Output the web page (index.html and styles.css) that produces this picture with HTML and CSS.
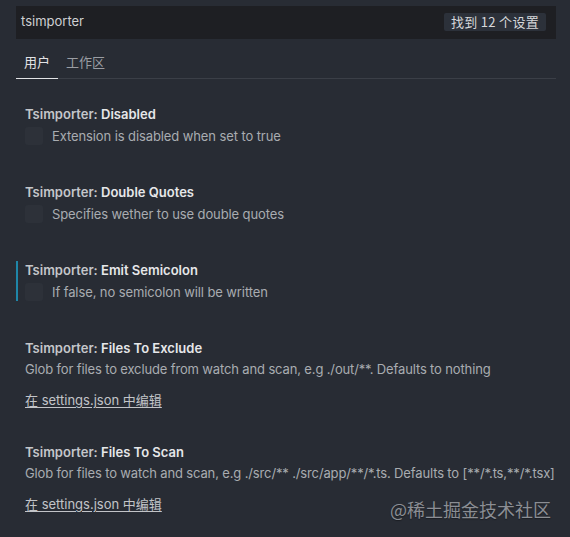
FILE: index.html
```html
<!DOCTYPE html>
<html lang="zh">
<head>
<meta charset="utf-8">
<link rel="stylesheet" href="styles.css">
</head>
<body>
<div class="page">
  <div class="search">
    <span class="query">tsimporter</span>
    <span class="badge">找到 12 个设置</span>
  </div>
  <div class="tabs">
    <span class="tab active">用户</span>
    <span class="tab">工作区</span>
  </div>
  <div class="list">
    <div class="setting bool">
      <div class="body">
        <div class="title"><span class="cat">Tsimporter: </span><span class="label">Disabled</span></div>
        <div class="row"><span class="check"></span><span class="desc">Extension is disabled when set to true</span></div>
      </div>
    </div>
    <div class="setting bool">
      <div class="body">
        <div class="title"><span class="cat">Tsimporter: </span><span class="label">Double Quotes</span></div>
        <div class="row"><span class="check"></span><span class="desc">Specifies wether to use double quotes</span></div>
      </div>
    </div>
    <div class="setting bool">
      <div class="body focused">
        <div class="title"><span class="cat">Tsimporter: </span><span class="label">Emit Semicolon</span></div>
        <div class="row"><span class="check"></span><span class="desc">If false, no semicolon will be written</span></div>
      </div>
    </div>
    <div class="setting text">
      <div class="body">
        <div class="title"><span class="cat">Tsimporter: </span><span class="label">Files To Exclude</span></div>
        <div class="desc block">Glob for files to exclude from watch and scan, e.g ./out/**. Defaults to nothing</div>
        <a class="link">在 settings.json 中编辑</a>
      </div>
    </div>
    <div class="setting text">
      <div class="body">
        <div class="title"><span class="cat">Tsimporter: </span><span class="label">Files To Scan</span></div>
        <div class="desc block">Glob for files to watch and scan, e.g ./src/** ./src/app/**/*.ts. Defaults to [**/*.ts,**/*.tsx]</div>
        <a class="link">在 settings.json 中编辑</a>
      </div>
    </div>
  </div>
  <div class="watermark">@稀土掘金技术社区</div>
</div>
</body>
</html>
```

FILE: styles.css
```css
html, body {
  margin: 0;
  padding: 0;
  background: #282c34;
}
body {
  font-family: Inter, "Noto Sans CJK SC", sans-serif;
  font-size: 13px;
  line-height: 18px;
  color: #abb2bf;
}
.page {
  position: relative;
  width: 570px;
  height: 537px;
  overflow: hidden;
}
.search {
  margin: 6px 14px 0 16px;
  height: 33px;
  box-sizing: border-box;
  padding: 0 10px 3px 5px;
  background: #1e1f23;
  display: flex;
  align-items: center;
  justify-content: space-between;
}
.query {
  color: #cfd0d2;
}
.badge {
  background: #2c313a;
  color: #d7d8da;
  height: 18px;
  line-height: 18px;
  padding: 0 7px 0 7px;
  border-radius: 2px;
  font-family: "Noto Sans CJK SC", sans-serif;
  letter-spacing: 0.3px;
  margin-top: 2px;
}
.tabs {
  margin: 14px 14px 0 16px;
  display: flex;
  border-bottom: 1px solid #3b3f47;
}
.tab {
  padding: 0 8px 7px;
  color: #9a9da3;
  font-family: "Noto Sans CJK SC", sans-serif;
  border-bottom: 1px solid transparent;
  margin-bottom: -1px;
}
.tab.active {
  color: #e2e3e5;
  border-bottom-color: #e2e3e5;
}
.list {
  margin-top: 26px;
  margin-left: 16px;
}
.setting.bool {
  padding-bottom: 38px;
}
.setting.text {
  padding-bottom: 34px;
}
.body {
  border-left: 2px solid transparent;
  padding-left: 7px;
}
.body.focused {
  border-left-color: #1f86a8;
}
.title {
  font-weight: 600;
}
.cat {
  color: #c4c6ca;
}
.label {
  color: #e6e7e9;
}
.row {
  display: flex;
  align-items: center;
  margin-top: 4px;
  height: 18px;
}
.check {
  width: 18px;
  height: 18px;
  border-radius: 3px;
  background: #2d3139;
  margin-right: 9px;
  flex: none;
}
.desc {
  color: #a9acb1;
  letter-spacing: -0.1px;
}
.desc.block {
  margin-top: 3px;
  white-space: nowrap;
  letter-spacing: -0.14px;
}
.link {
  display: inline-block;
  margin-top: 13px;
  color: #c2c4c8;
  text-decoration: underline;
  text-underline-offset: 2px;
  font-family: Inter, "Noto Sans CJK SC", sans-serif;
}
.watermark {
  position: absolute;
  right: 19px;
  top: 497px;
  font-family: "Noto Sans CJK SC", sans-serif;
  font-size: 18px;
  line-height: 24px;
  color: #8b8e94;
  text-shadow: 0 1px 1px rgba(0,0,0,0.35);
}
```
